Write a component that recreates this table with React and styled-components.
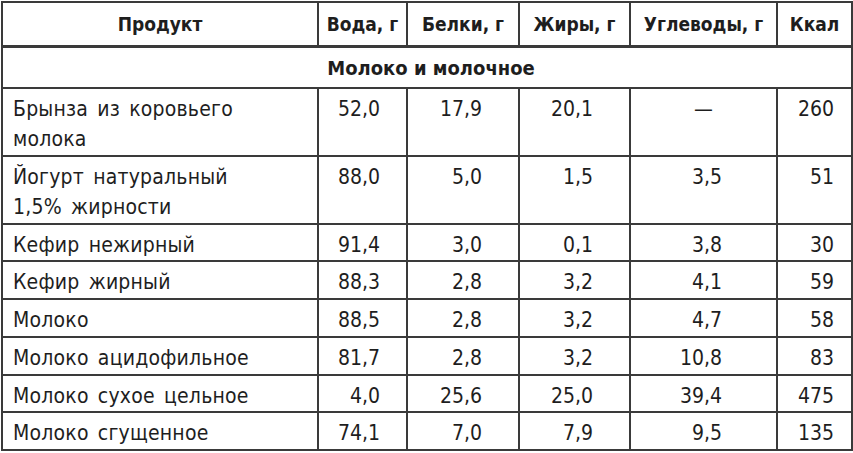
import React from "react";
import styled, { createGlobalStyle } from "styled-components";

const Global = createGlobalStyle`
  html, body { margin: 0; padding: 0; background: #fff; }
  body { font-family: "Liberation Sans Narrow", "DejaVu Sans Condensed", "Roboto Condensed", "Arial Narrow", sans-serif; color: #1e1e1e; }
`;

const Page = styled.div`
  padding: 1px 0 0 1px;
`;

const Table = styled.table`
  border-collapse: collapse;
  table-layout: fixed;
  width: 850px;
  font-size: 21px;
  letter-spacing: 0.2px;
  word-spacing: 3px;
`;

const HeadCell = styled.th`
  border: 2px solid #3a3a3a;
  border-bottom-width: 3px;
  height: 42px;
  padding: 0;
  font-size: 19px;
  font-weight: bold;
  text-align: center;
  letter-spacing: 0;
  word-spacing: 0;
`;

const SectionCell = styled.td`
  border: 2px solid #3a3a3a;
  height: 39px;
  padding: 0 0 0 8px;
  font-size: 20px;
  font-weight: bold;
  text-align: center;
  letter-spacing: 0;
  word-spacing: 0;
`;

const NameCell = styled.td`
  border: 2px solid #3a3a3a;
  padding: 5px 8px 0.75px 10px;
  line-height: 30px;
  vertical-align: top;
  text-align: left;
`;

const NumCell = styled.td`
  border: 2px solid #3a3a3a;
  padding: 5px ${(p) => (p.$center ? 0 : p.$pad)}px 0.75px 0;
  line-height: 30px;
  vertical-align: top;
  text-align: ${(p) => (p.$center ? "center" : "right")};
  letter-spacing: 0;
`;

const cols = [
  { w: 316 },
  { w: 89, pad: 26 },
  { w: 112, pad: 36 },
  { w: 111, pad: 36 },
  { w: 147, pad: 54 },
  { w: 75, pad: 17 },
];

const rows = [
  ["Брынза из коровьего\nмолока", "52,0", "17,9", "20,1", "—", "260"],
  ["Йогурт натуральный\n1,5% жирности", "88,0", "5,0", "1,5", "3,5", "51"],
  ["Кефир нежирный", "91,4", "3,0", "0,1", "3,8", "30"],
  ["Кефир жирный", "88,3", "2,8", "3,2", "4,1", "59"],
  ["Молоко", "88,5", "2,8", "3,2", "4,7", "58"],
  ["Молоко ацидофильное", "81,7", "2,8", "3,2", "10,8", "83"],
  ["Молоко сухое цельное", "4,0", "25,6", "25,0", "39,4", "475"],
  ["Молоко сгущенное", "74,1", "7,0", "7,9", "9,5", "135"],
];

const Lines = ({ text }) =>
  text.split("\n").map((t, i) => (
    <React.Fragment key={i}>
      {i > 0 && <br />}
      {t}
    </React.Fragment>
  ));

export default function App() {
  return (
    <Page>
      <Global />
      <Table>
        <colgroup>
          {cols.map((c, i) => (
            <col key={i} style={{ width: c.w }} />
          ))}
        </colgroup>
        <thead>
          <tr>
            <HeadCell>Продукт</HeadCell>
            <HeadCell>Вода, г</HeadCell>
            <HeadCell>Белки, г</HeadCell>
            <HeadCell>Жиры, г</HeadCell>
            <HeadCell>Углеводы, г</HeadCell>
            <HeadCell>Ккал</HeadCell>
          </tr>
        </thead>
        <tbody>
          <tr>
            <SectionCell colSpan={6}>Молоко и молочное</SectionCell>
          </tr>
          {rows.map((r, ri) => (
            <tr key={ri}>
              <NameCell>
                <Lines text={r[0]} />
              </NameCell>
              {r.slice(1).map((v, ci) => (
                <NumCell key={ci} $pad={cols[ci + 1].pad} $center={v === "—"}>
                  {v}
                </NumCell>
              ))}
            </tr>
          ))}
        </tbody>
      </Table>
    </Page>
  );
}
